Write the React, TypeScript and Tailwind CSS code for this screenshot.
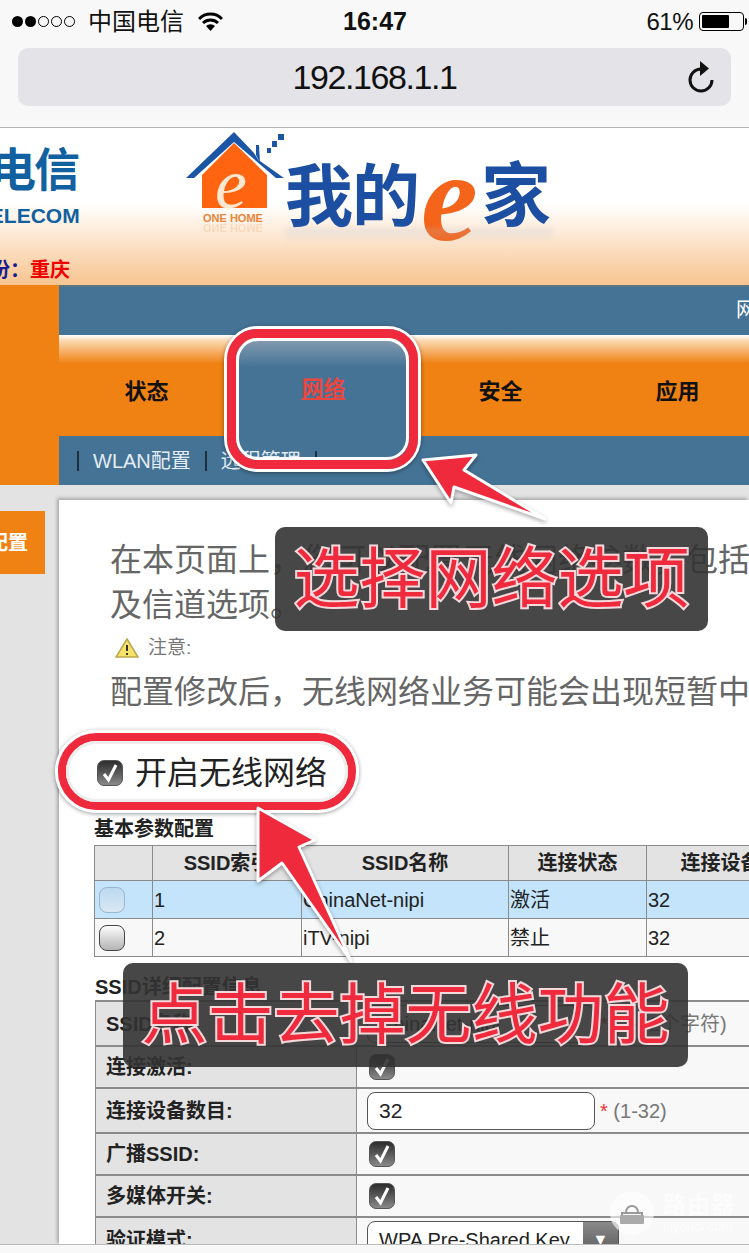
const cjk = "font-['Liberation_Sans','Noto_Sans_CJK_SC',sans-serif]"

function StatusBar() {
  return (
    <div className="flex h-[40px] items-center pt-[3px] text-[24px] leading-none text-[#111]">
      <div className="ml-[12px] flex w-[68px] items-center gap-[2px]">
        <span className="h-[11px] w-[11px] rounded-full bg-black" />
        <span className="h-[11px] w-[11px] rounded-full bg-black" />
        <span className="h-[11px] w-[11px] rounded-full border border-black" />
        <span className="h-[11px] w-[11px] rounded-full border border-black" />
        <span className="h-[11px] w-[11px] rounded-full border border-black" />
      </div>
      <span className="ml-[8px]">中国电信</span>
      <svg className="ml-[14px]" width="25" height="20" viewBox="0 0 25 20">
        <path d="M1 7 A16 16 0 0 1 24 7" fill="none" stroke="#000" strokeWidth="3" />
        <path d="M5 11 A11 11 0 0 1 20 11" fill="none" stroke="#000" strokeWidth="3" />
        <path d="M12.5 19 L8 14 A6.5 6.5 0 0 1 17 14 Z" fill="#000" />
      </svg>
      <span className="ml-[120px] text-[25px] font-bold">16:47</span>
      <span className="ml-auto mr-[3px] tracking-[-0.5px]">61%</span>
      <div className="ml-[3px] mr-[2px] flex items-center">
        <div className="h-[19px] w-[45px] rounded-[4px] border border-black p-[2px]">
          <div className="h-full w-[27px] rounded-[1px] bg-black" />
        </div>
        <div className="ml-[1px] h-[7px] w-[2px] rounded-r bg-black" />
      </div>
    </div>
  )
}

function UrlBar() {
  return (
    <div className="relative mx-[18px] mt-[8px] flex h-[58px] items-center justify-center rounded-[10px] bg-[#e4e4e8] text-[34px] tracking-[-1.4px] text-[#111]">
      192.168.1.1
      <svg className="absolute right-[15px] top-[12px]" width="30" height="34" viewBox="0 0 30 34">
        <path d="M15 9 A11 11 0 1 0 26 20" fill="none" stroke="#111" strokeWidth="3" />
        <path d="M14 1 L23 8.5 L14 16 Z" fill="#111" />
      </svg>
    </div>
  )
}

function Logo() {
  return (
    <div className="relative h-[157px] overflow-hidden bg-gradient-to-b from-white from-[48%] to-[#f7c48f]">
      <div className="absolute left-[-10px] top-[12px] text-[46px] font-bold leading-[60px] tracking-[-2px] text-[#11609f]">电信</div>
      <div className="absolute left-[-23px] top-[76px] w-[100px] text-right text-[21px] font-bold leading-[24px] text-[#11609f]">TELECOM</div>
      <div className="absolute left-[-30px] top-[130px] w-[100px] text-right text-[20px] font-bold leading-[24px] text-[#1b1b8f]">
        份：<span className="text-[#f00000]">重庆</span>
      </div>
      <svg className="absolute left-[184px] top-[3px]" width="104" height="80" viewBox="0 0 104 80">
        <path d="M18 44 L50 12 L83 44 L83 77 L18 77 Z" fill="#ff6510" />
        <path d="M2 47 L50 1 L70 22 L75 30 L76 30 L100 47 L92 47 L50 11 L10 47 Z" fill="#1b56a6" />
        <path d="M72 24 L72 14 L75 14 L76 32 Z" fill="#1b56a6" />
        <rect x="94" y="3" width="6" height="6" fill="#1b56a6" />
        <rect x="88" y="10" width="5" height="6" fill="#1b56a6" />
        <rect x="83" y="17" width="4" height="5" fill="#1b56a6" />
      </svg>
      <div className="absolute left-[215px] top-[26px] font-['Liberation_Serif',serif] text-[72px] italic leading-[60px] text-[#ffe8d2]">e</div>
      <div className="absolute left-[203px] top-[83px] whitespace-nowrap text-[11px] font-bold leading-[14px] text-[#e8853a]">ONE HOME</div>
      <div className="absolute left-[203px] top-[93px] -scale-y-100 whitespace-nowrap text-[11px] font-bold leading-[14px] text-[#e8853a] opacity-20">ONE HOME</div>
      <div className="absolute left-[285px] top-[33px] flex items-center text-[68px] font-bold leading-[72px] text-[#1c4ea2]">
        <span className="w-[136px] tracking-[-1px]">我的</span>
        <span className="w-[60px] font-['Liberation_Serif',serif] text-[128px] font-bold italic leading-[66px] text-[#f4641a]">e</span>
        <span className="text-[70px]">家</span>
      </div>
      <div className="absolute left-[285px] top-[100px] h-[16px] w-[268px] bg-gradient-to-b from-[#b8c2d8] to-transparent opacity-25 blur-[2px]" />
    </div>
  )
}

function Nav() {
  const tabs = ['状态', '网络', '安全', '应用']
  return (
    <div className="flex h-[200px]">
      <div className="w-[59px] bg-[#f08214]" />
      <div className="flex min-w-0 flex-1 flex-col">
        <div className="flex h-[50px] justify-end overflow-hidden border-t-2 border-[#5d7684] bg-[#447396] pt-[10px] text-[20px] leading-[26px] text-white">
          <span className="mr-[-7px]">网</span>
        </div>
        <div className="flex h-[101px] bg-[linear-gradient(#fff_0,#fbd7ae_6%,#f08214_28%)] text-[22px] font-bold text-[#111]">
          {tabs.map((t, i) => (
            <div key={t} className="flex w-[177px] shrink-0 items-center justify-center pr-[2px] pt-[12px]">
              {i === 1 ? (
                <div className="mr-[-2px] mt-[-6px] flex h-[95px] w-[177px] shrink-0 items-center justify-center bg-[linear-gradient(#8199ae,#447396_28%)] pr-[2px] text-[#e8473f] underline">
                  {t}
                </div>
              ) : (
                t
              )}
            </div>
          ))}
        </div>
        <div className="flex h-[49px] items-center gap-[14px] bg-[#447396] pl-[18px] text-[20px] text-[#e4edf3]">
          <span className="h-[20px] w-[2px] bg-[#1d2f3d]" />
          <span>WLAN配置</span>
          <span className="h-[20px] w-[2px] bg-[#1d2f3d]" />
          <span>远程管理</span>
          <span className="h-[20px] w-[2px] bg-[#1d2f3d]" />
        </div>
      </div>
    </div>
  )
}

function Check() {
  return (
    <div className="flex h-[26px] w-[26px] items-center justify-center rounded-[7px] border border-[#555] bg-gradient-to-b from-[#2d2d2d] to-[#8a8a8a]">
      <svg width="18" height="20" viewBox="0 0 18 20">
        <path d="M3 11 L7.5 17 L15 2" fill="none" stroke="#fff" strokeWidth="3" />
      </svg>
    </div>
  )
}

function Radio({ active }: { active?: boolean }) {
  return (
    <div
      className={
        active
          ? 'ml-[3px] h-[26px] w-[26px] rounded-[8px] border border-[#9db6cb] bg-gradient-to-b from-[#bcd9f0] to-[#d9e7f2]'
          : 'ml-[3px] h-[26px] w-[26px] rounded-[8px] border border-[#444] bg-gradient-to-b from-[#fdfdfd] to-[#b4b4b4]'
      }
    />
  )
}

function SsidTable() {
  const cell = 'border border-[#8b8b8b] px-[1px] text-left font-normal'
  return (
    <table className="w-[700px] table-fixed border-collapse text-[20px] text-[#222]">
      <colgroup>
        <col className="w-[58px]" />
        <col className="w-[149px]" />
        <col className="w-[207px]" />
        <col className="w-[138px]" />
        <col className="w-[148px]" />
      </colgroup>
      <thead>
        <tr className="h-[35px] bg-[#e3e3e3] font-bold">
          <th className={cell} />
          <th className="border border-[#8b8b8b] text-center">SSID索引</th>
          <th className="border border-[#8b8b8b] text-center">SSID名称</th>
          <th className="border border-[#8b8b8b] text-center">连接状态</th>
          <th className="border border-[#8b8b8b] text-center">连接设备</th>
        </tr>
      </thead>
      <tbody>
        <tr className="h-[38px] bg-[#c3e4fb]">
          <td className={cell}><Radio active /></td>
          <td className={cell}>1</td>
          <td className={cell}>ChinaNet-nipi</td>
          <td className={cell}>激活</td>
          <td className={cell}>32</td>
        </tr>
        <tr className="h-[38px] bg-[#f8f8f8]">
          <td className={cell}><Radio /></td>
          <td className={cell}>2</td>
          <td className={cell}>iTV-nipi</td>
          <td className={cell}>禁止</td>
          <td className={cell}>32</td>
        </tr>
      </tbody>
    </table>
  )
}

function DetailRow({ label, h, children }: { label: string; h: string; children: React.ReactNode }) {
  return (
    <div className={`flex border-b-2 border-[#8b8b8b] ${h}`}>
      <div className="flex w-[261px] shrink-0 items-center border-r border-[#8b8b8b] bg-[#e3e3e3] pl-[10px] text-[20px] font-bold text-[#222]">
        {label}
      </div>
      <div className="flex min-w-0 flex-1 items-center bg-[#f8f8f8] pl-[10px]">{children}</div>
    </div>
  )
}

function DetailTable() {
  return (
    <div className="w-[700px] border-l border-t-2 border-[#8b8b8b]">
      <DetailRow label="SSID名称:" h="h-[45px]">
        <div className="h-[38px] w-[228px] rounded-[8px] border border-[#555] bg-white pl-[11px] text-[20px] leading-[36px] text-[#222]">ChinaNet-nipi</div>
        <span className="ml-[5px] text-[20px] text-[#777]"><span className="text-[#e33]">*</span> (1-32个字符)</span>
      </DetailRow>
      <DetailRow label="连接激活:" h="h-[42px]"><div className="ml-[2px]"><Check /></div></DetailRow>
      <DetailRow label="连接设备数目:" h="h-[45px]">
        <div className="h-[38px] w-[228px] rounded-[8px] border border-[#555] bg-white pl-[11px] text-[21px] leading-[36px] text-[#222]">32</div>
        <span className="ml-[5px] text-[20px] text-[#777]"><span className="text-[#e33]">*</span> (1-32)</span>
      </DetailRow>
      <DetailRow label="广播SSID:" h="h-[42px]"><div className="ml-[2px]"><Check /></div></DetailRow>
      <DetailRow label="多媒体开关:" h="h-[42px]"><div className="ml-[2px]"><Check /></div></DetailRow>
      <DetailRow label="验证模式:" h="h-[45px]">
        <div className="flex h-[38px] w-[252px] overflow-hidden rounded-[8px] border border-[#555] bg-white pl-[11px] text-[20px] leading-[36px] text-[#222]">
          <span className="flex-1">WPA Pre-Shared Key</span>
          <div className="flex w-[35px] items-center justify-center bg-gradient-to-b from-[#8a8a8a] to-[#555] text-[16px] text-white">▼</div>
        </div>
      </DetailRow>
    </div>
  )
}

function Content() {
  return (
    <div className="flex h-[760px] overflow-hidden bg-[#e3e3e3]">
      <div className="w-[59px] shrink-0 overflow-hidden pt-[26px]">
        <div className="flex h-[63px] w-[45px] items-center bg-[#f08214] text-[20px] font-bold text-white">
          <span className="ml-[-12px] whitespace-nowrap">配置</span>
        </div>
      </div>
      <div className="mt-[15px] min-w-0 flex-1 overflow-hidden bg-white pt-[38px] shadow-[-2px_-2px_3px_#aaa]">
        <div className="whitespace-nowrap pl-[51px] text-[32px] leading-[45px] text-[#666]">
          <p>在本页面上，您可以配置无线网络参数，包括无线</p>
          <p>及信道选项。</p>
        </div>
        <div className="mt-[5px] flex h-[30px] items-center pl-[56px] text-[19px] text-[#777]">
          <svg width="24" height="20" viewBox="0 0 24 20">
            <path d="M12 1 L23 19 L1 19 Z" fill="#f5e26b" stroke="#b9a84a" strokeWidth="1.5" />
            <path d="M12 7 V13 M12 15 V17" stroke="#333" strokeWidth="2" />
          </svg>
          <span className="ml-[9px]">注意:</span>
        </div>
        <p className="mt-[6px] whitespace-nowrap pl-[51px] text-[32px] leading-[46px] text-[#666]">配置修改后，无线网络业务可能会出现短暂中断</p>
        <div className="ml-[38px] mt-[41px] flex h-[34px] items-center">
          <Check />
          <span className="ml-[12px] text-[32px] leading-none text-[#222]">开启无线网络</span>
        </div>
        <div className="ml-[35px] mt-[26px] text-[20px] font-bold leading-[26px] text-[#222]">基本参数配置</div>
        <div className="ml-[35px] mt-[3px]"><SsidTable /></div>
        <div className="ml-[36px] mt-[17px] text-[20px] font-bold leading-[26px] text-[#222]">SSID详细配置信息</div>
        <div className="ml-[36px]"><DetailTable /></div>
      </div>
    </div>
  )
}

function Annotations() {
  const label = 'absolute flex items-center justify-center whitespace-nowrap rounded-[10px] bg-[#333]/90 text-[66px] leading-none text-[#ee2a3c] [-webkit-text-stroke:4px_#f4d9dc] [paint-order:stroke_fill]'
  return (
    <>
      <div className="absolute left-[224px] top-[326px] h-[146px] w-[197px] rounded-[34px] border-[3px] border-white shadow-[0_1px_4px_#0006]">
        <div className="h-full w-full rounded-[30px] border-[9px] border-[#ee2a3c]">
          <div className="h-full w-full rounded-[22px] border-[3px] border-white" />
        </div>
      </div>
      <svg className="absolute left-[415px] top-[448px] drop-shadow-[0_2px_2px_#0005]" width="140" height="80" viewBox="415 448 140 80">
        <path d="M423 460 L476 455 L464 470 L545 519 L454 487 L451 503 Z" fill="#ee2a3c" stroke="#fff" strokeWidth="3" strokeLinejoin="round" />
      </svg>
      <div className={`${label} left-[275px] top-[527px] h-[104px] w-[433px]`}>选择网络选项</div>

      <div className="absolute left-[55px] top-[730px] h-[83px] w-[304px] rounded-full border-[3px] border-white shadow-[0_1px_4px_#0006]">
        <div className="h-full w-full rounded-full border-[8px] border-[#ee2a3c]">
          <div className="h-full w-full rounded-full border-[3px] border-[#eee]" />
        </div>
      </div>
      <svg className="absolute left-[245px] top-[800px] drop-shadow-[0_2px_2px_#0005]" width="120" height="170" viewBox="245 800 120 170">
        <path d="M258 808 L315 840 L299 847 L351 961 L282 863 L258 881 Z" fill="#ee2a3c" stroke="#fff" strokeWidth="3" strokeLinejoin="round" />
      </svg>
      <div className={`${label} left-[123px] top-[963px] h-[104px] w-[565px]`}>点击去掉无线功能</div>

      <div className="absolute left-[610px] top-[1191px] flex items-center text-white/70">
        <div className="flex h-[44px] w-[44px] items-center justify-center rounded-full bg-white/60">
          <svg width="28" height="28" viewBox="0 0 28 28">
            <path d="M8 13 A6 6 0 0 1 20 13 M4 14 H24 V24 H4 Z" fill="none" stroke="#999" strokeWidth="2" />
            <rect x="2" y="16" width="24" height="9" rx="1" fill="#aaa" />
          </svg>
        </div>
        <div className="ml-[9px] leading-none">
          <div className="text-[23px] font-bold tracking-[1px]">路由器</div>
          <div className="mt-[3px] text-[13px]">luyouqi.com</div>
        </div>
      </div>
    </>
  )
}

export default function App() {
  return (
    <div className={`relative h-[1253px] w-[749px] overflow-hidden bg-[#f8f8f8] ${cjk}`}>
      <div className="h-[128px] border-b border-[#b4b4b4]">
        <StatusBar />
        <UrlBar />
      </div>
      <Logo />
      <Nav />
      <Content />
      <div className="absolute bottom-0 left-0 h-[9px] w-full border-t border-[#bbb] bg-[#f8f8f8]" />
      <Annotations />
    </div>
  )
}
